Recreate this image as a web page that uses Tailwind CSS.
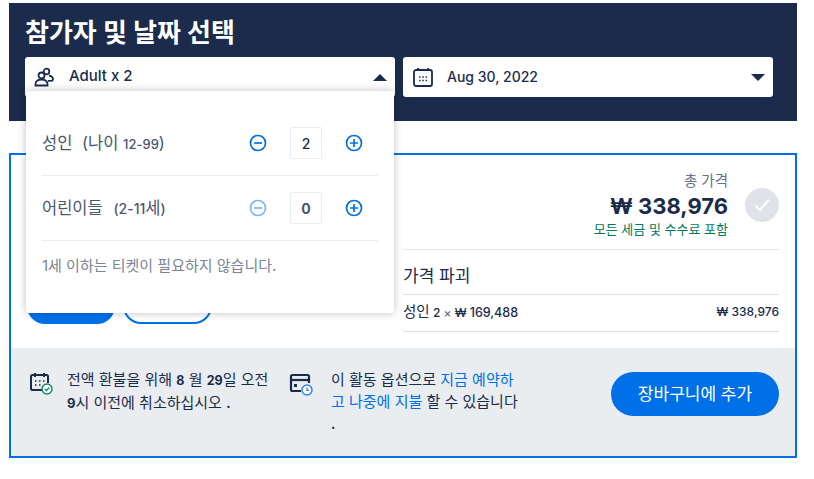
<!DOCTYPE html>
<html lang="en">
  <head>
    <meta charset="UTF-8" />
    <title>참가자 및 날짜 선택</title>
    <script src="https://cdn.jsdelivr.net/npm/@tailwindcss/browser@4"></script>
  </head>
  <body class="bg-white font-['Inter','Noto_Sans_CJK_KR',sans-serif] text-[#1b2b4b] overflow-hidden">
    <div class="relative ml-[9px] mt-[3px] w-[788px]">
      <!-- Navy header -->
      <div class="bg-[#1b2b4b] h-[118px] px-[16px] pt-[13px]">
        <h2 class="text-[26px] leading-[34px] font-bold text-white">참가자 및 날짜 선택</h2>
        <div class="flex gap-[8px] mt-[7px]">
          <div class="w-[370px] h-[40px] bg-white rounded-[3px] flex items-center pl-[9px] pr-[8px]">
            <svg class="w-[20px] h-[20px] text-[#1b2b4b]" viewBox="0 0 20 20" fill="none" stroke="currentColor" stroke-width="1.800">
              <circle cx="12.500" cy="4.500" r="2.800" />
              <circle cx="7.500" cy="8.500" r="3" />
              <path d="M1.500 18.500v-1.500c0-2.600 2.400-4.500 6-4.500s6 1.900 6 4.500v1.500z" />
              <path d="M15 8.500c2.200.5 4 2 4 3.700 0 1-.8 1.600-2.200 1.600h-3" />
            </svg>
            <span class="ml-[15px] pb-[2px] text-[15px] font-medium flex-1">Adult x 2</span>
            <div class="w-0 h-0 border-x-[7px] border-x-transparent border-b-[7px] border-b-[#1b2b4b]"></div>
          </div>
          <div class="w-[370px] h-[40px] bg-white rounded-[3px] flex items-center pl-[10px] pr-[8px]">
            <svg class="w-[20px] h-[20px] text-[#1b2b4b]" viewBox="0 0 20 20" fill="none" stroke="currentColor" stroke-width="1.800">
              <rect x="1" y="3" width="18" height="16" rx="2" />
              <path d="M5 1v3M15 1v3" />
              <path d="M6 10h1.500M9.300 10h1.500M12.600 10h1.500M6 13.500h1.500M9.300 13.500h1.500M12.600 13.500h1.500" stroke-width="1.300" />
            </svg>
            <span class="ml-[14px] pb-[2px] text-[14px] font-medium flex-1">Aug 30, 2022</span>
            <div class="w-0 h-0 border-x-[7px] border-x-transparent border-t-[7px] border-t-[#1b2b4b]"></div>
          </div>
        </div>
      </div>

      <!-- Card -->
      <div class="mt-[32px] border-2 border-[#0070e8] h-[305px] flex flex-col">
        <div class="h-[193px] flex justify-end pr-[16px] pt-[17px]">
          <div class="w-[376px]">
            <div class="flex justify-end items-start gap-[17px] h-[78px] border-b border-[#e6e8ec]">
              <div class="text-right">
                <div class="text-[14.5px] leading-[18px] text-[#68738a]">총 가격</div>
                <div class="text-[22px] leading-[30px] mt-[1px] font-bold">₩ 338,976</div>
                <div class="text-[13px] leading-[16px] text-[#007a5a]">모든 세금 및 수수료 포함</div>
              </div>
              <div class="w-[34px] h-[34px] mt-[16px] rounded-full bg-[#dfe2e7] flex items-center justify-center">
                <svg class="w-[18px] h-[18px]" viewBox="0 0 18 18" fill="none" stroke="white" stroke-width="2"><path d="M2.500 9.500l4.500 4.500 8.500-10" /></svg>
              </div>
            </div>
            <div class="h-[45px] pt-[9px] border-b border-[#dcdfe5] text-[17px] flex items-center">가격 파괴</div>
            <div class="h-[37px] pb-[2px] border-b border-[#dcdfe5] text-[12px] font-medium flex justify-between items-center">
              <span><span class="text-[14.500px] font-normal">성인</span> 2 <span class="text-[#68738a]">×</span> ₩ <span class="text-[12.500px]">169,488</span></span>
              <span>₩ 338,976</span>
            </div>
          </div>
        </div>
        <!-- Footer -->
        <div class="bg-[#e9edf0] flex-1 flex pl-[18px] pr-[16px] pt-[21px] text-[15px] leading-[22px]">
          <svg class="w-[24px] h-[24px] mt-[2px] shrink-0" viewBox="0 0 24 24" fill="none" stroke="#1b2b4b" stroke-width="2">
            <path d="M13 19H3.500A1.500 1.500 0 0 1 2 17.500V5.500A1.500 1.500 0 0 1 3.500 4h14A1.500 1.500 0 0 1 19 5.500V12" />
            <path d="M6 2v4M15 2v4" />
            <path d="M6 10h1.500M10 10h1.500M14 10h1.500M6 14h1.500M10 14h1.500" stroke-width="1.400" />
            <circle cx="18" cy="18" r="5" fill="white" stroke="#188a65" stroke-width="1.500" />
            <path d="M15.800 18l1.600 1.600 2.900-3" stroke="#188a65" stroke-width="1.400" />
          </svg>
          <p class="w-[205px] ml-[14px] text-[#1b2b4b]">전액 환불을 위해 <b class="text-[12.500px]">8</b> 월 <b class="text-[12.500px]">29</b>일 오전<br /><b class="text-[13px]">9</b>시 이전에 취소하십시오 <b class="text-[13px]">.</b></p>
          <svg class="w-[24px] h-[24px] ml-[17px] mt-[4px] shrink-0" viewBox="0 0 24 24" fill="none" stroke="#1b2b4b" stroke-width="2.200">
            <path d="M12 18H3.500A1.500 1.500 0 0 1 2 16.500V3.500A1.500 1.500 0 0 1 3.500 2h15A1.500 1.500 0 0 1 20 3.500V10" />
            <path d="M2 7h18" />
            <rect x="5" y="11" width="3" height="3" fill="#1b2b4b" stroke="none" />
            <circle cx="18" cy="17" r="5" fill="white" stroke="#2f86ea" stroke-width="1.500" />
            <path d="M18 14.500V17.300h2" stroke="#2f86ea" stroke-width="1.300" />
          </svg>
          <p class="w-[190px] ml-[18px] whitespace-nowrap">이 활동 옵션으로 <span class="text-[#0070e8]">지금 예약하<br />고 나중에 지불</span> 할 수 있습니다<br /><b class="text-[13px]">.</b></p>
          <button class="ml-auto w-[168px] h-[44px] mt-[3px] rounded-full bg-[#0070e8] text-white text-[17px]">장바구니에 추가</button>
        </div>
      </div>

      <!-- Buttons behind the dropdown -->
      <div class="absolute left-[18px] top-[290px] w-[88px] h-[31px] rounded-b-[18px] bg-[#0070e8]"></div>
      <div class="absolute left-[114px] top-[290px] w-[89px] h-[31px] rounded-b-[18px] border-2 border-[#0070e8] bg-white"></div>

      <!-- Participants dropdown -->
      <div class="absolute left-[17px] top-[88px] w-[368px] h-[222px] bg-white rounded-[3px] shadow-[0_0_8px_rgba(0,0,0,0.25)] px-[16px] pt-[20px]">
        <div class="h-[65px] border-b border-[#e9ecf1] flex items-center">
          <span class="flex-1 text-[16.5px] text-[#4b566d]">성인 <span class="ml-[5px]">(나이 <span class="font-medium text-[13px]">12-99</span>)</span></span>
          <svg class="w-[18px] h-[18px]" viewBox="0 0 18 18" fill="none" stroke="#0070e8" stroke-width="1.700"><circle cx="9" cy="9" r="7.500" /><path d="M5 9h8" /></svg>
          <div class="w-[32px] h-[32px] mx-[23px] border border-[#e9ecf1] rounded-[2px] flex items-center justify-center text-[14px] font-medium">2</div>
          <svg class="w-[18px] h-[18px] mr-[15px]" viewBox="0 0 18 18" fill="none" stroke="#0070e8" stroke-width="1.700"><circle cx="9" cy="9" r="7.500" /><path d="M5 9h8M9 5v8" /></svg>
        </div>
        <div class="h-[65px] border-b border-[#e9ecf1] flex items-center">
          <span class="flex-1 text-[16.5px] text-[#4b566d]">어린이들 <span class="ml-[6px] font-medium text-[14px]">(2-11<span class="text-[16.5px] font-normal">세</span>)</span></span>
          <svg class="w-[18px] h-[18px]" viewBox="0 0 18 18" fill="none" stroke="#7fb7f3" stroke-width="1.700"><circle cx="9" cy="9" r="7.500" /><path d="M5 9h8" /></svg>
          <div class="w-[32px] h-[32px] mx-[23px] border border-[#e9ecf1] rounded-[2px] flex items-center justify-center text-[14px] font-bold text-[#4b566d]">0</div>
          <svg class="w-[18px] h-[18px] mr-[15px]" viewBox="0 0 18 18" fill="none" stroke="#0070e8" stroke-width="1.700"><circle cx="9" cy="9" r="7.500" /><path d="M5 9h8M9 5v8" /></svg>
        </div>
        <p class="mt-[15px] text-[15px] leading-[20px] text-[#7a8496]">1세 이하는 티켓이 필요하지 않습니다.</p>
      </div>
    </div>
  </body>
</html>
